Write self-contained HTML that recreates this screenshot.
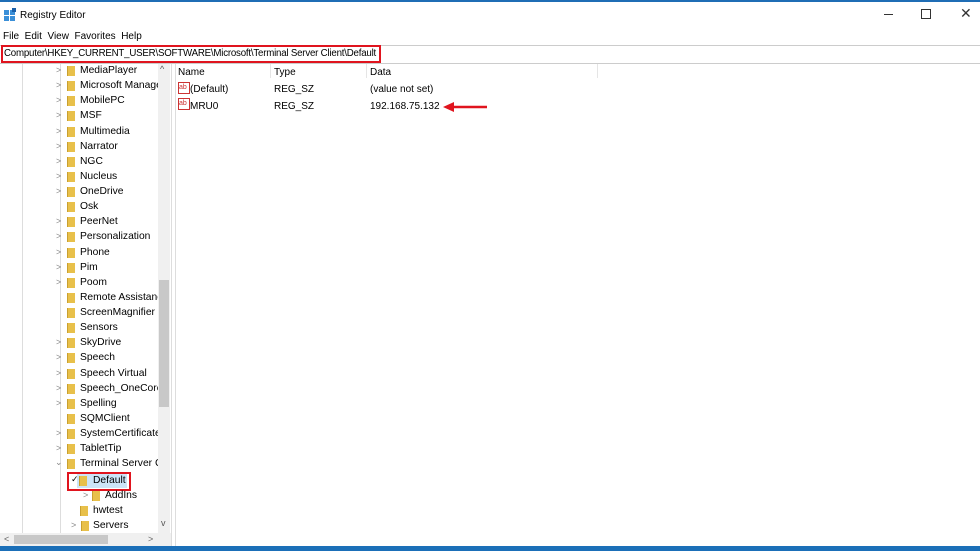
<!DOCTYPE html>
<html><head><style>
body{margin:0;width:980px;height:551px;overflow:hidden;background:#fff;font-family:"Liberation Sans",sans-serif;font-size:10px;color:#000;position:relative}
.a{position:absolute;white-space:nowrap}
.f{position:absolute;width:7px;height:10px;background:#e8c04a;border-left:1px solid #c9a030}
.ch{position:absolute;font-size:9px;color:#888}
</style></head><body>
<div class="a" style="left:0;top:0;width:980px;height:2px;background:#1f6db5"></div>
<svg class="a" style="left:4px;top:8px" width="13" height="13"><rect x="0" y="2" width="5" height="5" fill="#3a8fd8"/><rect x="6" y="2" width="5" height="5" fill="#3a8fd8"/><rect x="0" y="8" width="5" height="5" fill="#3a8fd8"/><rect x="6" y="8" width="5" height="5" fill="#3a8fd8"/><rect x="8" y="0" width="4" height="4" fill="#1a5fa8"/></svg>
<div class="a" style="left:20px;top:10px;font-size:10px">Registry Editor</div>
<div class="a" style="left:884px;top:14px;width:9px;height:1px;background:#333"></div>
<div class="a" style="left:921px;top:9px;width:8px;height:8px;border:1px solid #333"></div>
<div class="a" style="left:960px;top:5px;font-size:14px;color:#333">✕</div>
<div class="a" style="left:3px;top:31px">File&nbsp; Edit&nbsp; View&nbsp; Favorites&nbsp; Help</div>
<div class="a" style="left:0;top:45px;width:980px;height:17px;border-top:1px solid #ccc;border-bottom:1px solid #ccc"></div>
<div class="a" style="left:1px;top:45px;width:376px;height:14px;border:2px solid #e0141e"></div>
<div class="a" style="left:4px;top:48px;font-size:9.7px;letter-spacing:-0.2px">Computer\HKEY_CURRENT_USER\SOFTWARE\Microsoft\Terminal Server Client\Default</div>
<div class="a" style="left:22px;top:64px;width:1px;height:470px;background:#ddd"></div>
<div class="a" style="left:60px;top:64px;width:1px;height:470px;background:#ddd"></div>
<div class="a" style="left:158px;top:64px;width:12px;height:470px;background:#f0f0f0"></div>
<div class="a" style="left:159px;top:280px;width:10px;height:127px;background:#c8c8c8"></div>
<div class="a" style="left:160px;top:64px;font-size:9px;color:#555">^</div>
<div class="a" style="left:161px;top:518px;font-size:9px;color:#555">v</div>
<div class="a" style="left:171px;top:64px;width:3px;height:483px;border-left:1px solid #ddd;border-right:1px solid #ddd"></div>
<div class="a" style="left:0;top:533px;width:171px;height:13px;background:#f0f0f0"></div>
<div class="a" style="left:14px;top:535px;width:94px;height:9px;background:#c8c8c8"></div>
<div class="a" style="left:4px;top:534px;font-size:9px;color:#666">&lt;</div>
<div class="a" style="left:148px;top:534px;font-size:9px;color:#666">&gt;</div>
<div class="a" style="left:0;top:546px;width:980px;height:5px;background:#1b6fb8"></div>
<div id="t"></div>
<script>
var items=[["MediaPlayer",1],["Microsoft Manage",1],["MobilePC",1],["MSF",1],["Multimedia",1],["Narrator",1],["NGC",1],["Nucleus",1],["OneDrive",1],["Osk",0],["PeerNet",1],["Personalization",1],["Phone",1],["Pim",1],["Poom",1],["Remote Assistance",0],["ScreenMagnifier",0],["Sensors",0],["SkyDrive",1],["Speech",1],["Speech Virtual",1],["Speech_OneCore",1],["Spelling",1],["SQMClient",0],["SystemCertificates",1],["TabletTip",1],["Terminal Server Cl",2]];
var h="";
items.forEach(function(it,i){var y=71+i*15.13;
if(it[1]==1)h+='<div class="ch" style="left:56px;top:'+(y-6)+'px">&gt;</div>';
if(it[1]==2)h+='<div class="ch" style="left:55px;top:'+(y-7)+'px">&#8964;</div>';
h+='<div class="f" style="left:67px;top:'+(y-5)+'px"></div>';
h+='<div class="a" style="left:80px;top:'+(y-6)+'px;width:78px;overflow:hidden;font-size:10.3px">'+it[0]+'</div>';});
var y=480.5;
h+='<div class="a" style="left:77px;top:'+(y-7)+'px;width:50px;height:14px;background:#cce4f7"></div>';
h+='<div class="a" style="left:67px;top:'+(y-9)+'px;width:60px;height:15px;border:2px solid #e0141e"></div>';
h+='<div class="a" style="left:71px;top:'+(y-7)+'px;font-size:9px">&#10003;</div>';
h+='<div class="f" style="left:79px;top:'+(y-5)+'px"></div><div class="a" style="left:93px;top:'+(y-6)+'px;font-size:10.3px">Default</div>';
y=495.6;h+='<div class="ch" style="left:83px;top:'+(y-6)+'px">&gt;</div><div class="f" style="left:92px;top:'+(y-5)+'px"></div><div class="a" style="left:105px;top:'+(y-6)+'px;font-size:10.3px">AddIns</div>';
y=510.7;h+='<div class="f" style="left:80px;top:'+(y-5)+'px"></div><div class="a" style="left:93px;top:'+(y-6)+'px;font-size:10.3px">hwtest</div>';
y=525.8;h+='<div class="ch" style="left:71px;top:'+(y-6)+'px">&gt;</div><div class="f" style="left:81px;top:'+(y-5)+'px"></div><div class="a" style="left:93px;top:'+(y-6)+'px;font-size:10.3px">Servers</div>';
document.getElementById("t").innerHTML=h;
</script>
<div class="a" style="left:178px;top:67px">Name</div>
<div class="a" style="left:274px;top:67px">Type</div>
<div class="a" style="left:370px;top:67px">Data</div>
<div class="a" style="left:270px;top:64px;width:1px;height:14px;background:#e5e5e5"></div>
<div class="a" style="left:366px;top:64px;width:1px;height:14px;background:#e5e5e5"></div>
<div class="a" style="left:597px;top:64px;width:1px;height:14px;background:#e5e5e5"></div>
<div class="a" style="left:178px;top:82px;width:10px;height:10px;border:1px solid #c33;font-size:7px;color:#c33;line-height:9px">ab</div>
<div class="a" style="left:190px;top:84px">(Default)</div>
<div class="a" style="left:274px;top:84px">REG_SZ</div>
<div class="a" style="left:370px;top:84px">(value not set)</div>
<div class="a" style="left:178px;top:98px;width:10px;height:10px;border:1px solid #c33;font-size:7px;color:#c33;line-height:9px">ab</div>
<div class="a" style="left:190px;top:101px">MRU0</div>
<div class="a" style="left:274px;top:101px">REG_SZ</div>
<div class="a" style="left:370px;top:101px">192.168.75.132</div>
<svg class="a" style="left:443px;top:101px" width="46" height="12"><line x1="8" y1="6" x2="44" y2="6" stroke="#e0141e" stroke-width="2.5"/><polygon points="0,6 11,1 11,11" fill="#e0141e"/></svg>
</body></html>
